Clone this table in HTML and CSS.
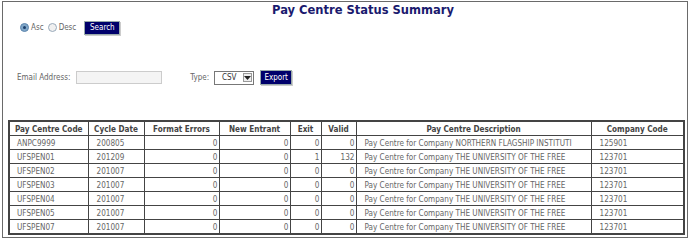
FILE: index.html
```html
<!DOCTYPE html>
<html>
<head>
<meta charset="utf-8">
<link rel="stylesheet" href="styles.css">
</head>
<body>
<div class="frame">
  <h1 class="title">Pay Centre Status Summary</h1>
  <div class="sort-row">
    <span class="radio checked"></span><span class="lbl">Asc</span>
    <span class="radio"></span><span class="lbl">Desc</span>
    <span class="btn search">Search</span>
  </div>
  <div class="export-row">
    <span class="lbl email-lbl">Email Address:</span>
    <span class="input"></span>
    <span class="lbl type-lbl">Type:</span>
    <span class="select"><span class="sel-text">CSV</span><span class="sel-arrow"><svg width="7" height="4" viewBox="0 0 7 4"><path d="M0 0H7L3.5 4Z" fill="#222"/></svg></span></span>
    <span class="btn export">Export</span>
  </div>
  <table class="grid">
    <colgroup>
      <col style="width:79px"><col style="width:56px"><col style="width:75px"><col style="width:71px"><col style="width:31px"><col style="width:35px"><col style="width:235px"><col style="width:93px">
    </colgroup>
    <thead>
      <tr><th>Pay Centre Code</th><th>Cycle Date</th><th>Format Errors</th><th>New Entrant</th><th>Exit</th><th>Valid</th><th>Pay Centre Description</th><th>Company Code</th></tr>
    </thead>
    <tbody>
      <tr><td class="first">ANPC9999</td><td>200805</td><td class="num">0</td><td class="num">0</td><td class="num">0</td><td class="num">0</td><td>Pay Centre for Company NORTHERN FLAGSHIP INSTITUTI</td><td>125901</td></tr>
      <tr><td class="first">UFSPEN01</td><td>201209</td><td class="num">0</td><td class="num">0</td><td class="num">1</td><td class="num">132</td><td>Pay Centre for Company THE UNIVERSITY OF THE FREE</td><td>123701</td></tr>
      <tr><td class="first">UFSPEN02</td><td>201007</td><td class="num">0</td><td class="num">0</td><td class="num">0</td><td class="num">0</td><td>Pay Centre for Company THE UNIVERSITY OF THE FREE</td><td>123701</td></tr>
      <tr><td class="first">UFSPEN03</td><td>201007</td><td class="num">0</td><td class="num">0</td><td class="num">0</td><td class="num">0</td><td>Pay Centre for Company THE UNIVERSITY OF THE FREE</td><td>123701</td></tr>
      <tr><td class="first">UFSPEN04</td><td>201007</td><td class="num">0</td><td class="num">0</td><td class="num">0</td><td class="num">0</td><td>Pay Centre for Company THE UNIVERSITY OF THE FREE</td><td>123701</td></tr>
      <tr><td class="first">UFSPEN05</td><td>201007</td><td class="num">0</td><td class="num">0</td><td class="num">0</td><td class="num">0</td><td>Pay Centre for Company THE UNIVERSITY OF THE FREE</td><td>123701</td></tr>
      <tr><td class="first">UFSPEN07</td><td>201007</td><td class="num">0</td><td class="num">0</td><td class="num">0</td><td class="num">0</td><td>Pay Centre for Company THE UNIVERSITY OF THE FREE</td><td>123701</td></tr>
    </tbody>
  </table>
</div>
</body>
</html>
```
FILE: styles.css
```css
html, body { margin: 0; padding: 0; background: #fff; }
body { font-family: "DejaVu Sans Condensed", "DejaVu Sans", sans-serif; color: #555; }
.frame {
  margin: 1px 0 0 2px;
  width: 686px;
  height: 237px;
  border: 1px solid #6a6a6a;
  box-sizing: border-box;
  position: relative;
}
.title {
  margin: 1px 0 0 0;
  padding-left: 36px;
  text-align: center;
  font-family: "DejaVu Sans", Verdana, sans-serif;
  font-size: 11.5px;
  line-height: 14px;
  font-weight: bold;
  color: #1a1a6e;
}
.sort-row {
  display: flex;
  align-items: center;
  margin: 3px 0 0 17px;
  height: 15px;
}
.radio {
  width: 7px; height: 7px;
  border: 1px solid #9ab;
  border-radius: 50%;
  background: #f0f0f0;
  box-sizing: content-box;
  position: relative;
  margin-right: 2px;
}
.radio.checked { background: #7fa6c8; border-color: #5e86ad; }
.radio.checked::after {
  content: ""; position: absolute; left: 2px; top: 2px; width: 3px; height: 3px; border-radius: 50%; background: #1b3f6b;
}
.lbl { font-size: 8px; color: #666; margin-right: 4px; }
.btn {
  display: inline-flex; align-items: center; justify-content: center;
  background: #00006b; color: #fff; font-size: 8px;
  border: 1px solid #9aa; box-shadow: 1px 1px 0 #ccc;
  height: 14px; box-sizing: border-box;
}
.search { width: 36px; margin-left: 4px; }
.export-row {
  display: flex; align-items: center;
  margin: 35px 0 0 14px; height: 15px;
}
.email-lbl { margin-right: 6px; }
.input { width: 86px; height: 13px; box-sizing: border-box; border: 1px solid #ccc; background: #f4f4f4; margin-right: 28px; }
.type-lbl { margin-right: 5px; }
.select {
  display: inline-flex; align-items: center; width: 40px; height: 14px; box-sizing: border-box;
  border: 1px solid #777; background: #fff; margin-right: 6px;
}
.sel-text { flex: 1; font-size: 8px; color: #333; text-align: center; }
.sel-arrow { width: 9px; height: 9px; border: 1px solid #999; background: #eee; margin-right: 1px; display: flex; align-items: center; justify-content: center; box-sizing: border-box; }
.export { width: 32px; height: 15px; }
.grid {
  margin: 35px 0 0 5px;
  border-collapse: collapse;
  table-layout: fixed;
  width: 676px;
  border: 2px solid #444;
  font-size: 8.1px;
}
.grid th, .grid td {
  border: 1px solid #444;
  height: 13px;
  padding: 0 2px 0 8px;
  white-space: nowrap;
  overflow: hidden;
  line-height: 12px;
}
.grid th { font-weight: bold; color: #444; text-align: center; padding: 0 2px; }
.grid td { color: #666; text-align: left; }
.grid td.first { padding-left: 7px; }
.grid td.num { text-align: right; padding-right: 1px; }
```
